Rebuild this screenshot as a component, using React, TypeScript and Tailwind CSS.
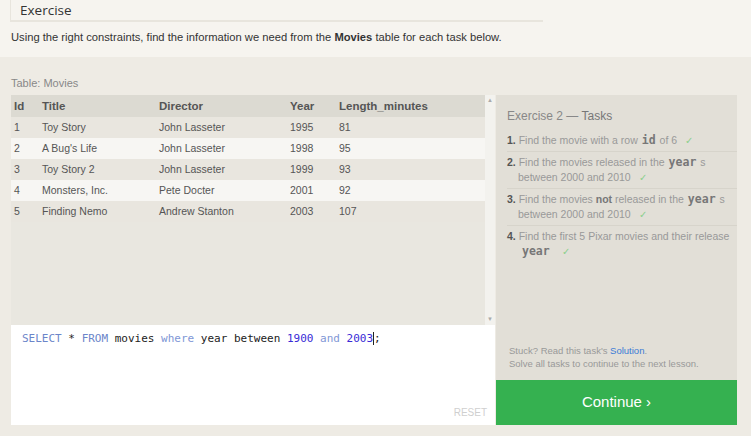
import React from 'react';

const rows = [
  ['1', 'Toy Story', 'John Lasseter', '1995', '81'],
  ['2', "A Bug's Life", 'John Lasseter', '1998', '95'],
  ['3', 'Toy Story 2', 'John Lasseter', '1999', '93'],
  ['4', 'Monsters, Inc.', 'Pete Docter', '2001', '92'],
  ['5', 'Finding Nemo', 'Andrew Stanton', '2003', '107'],
];

const Check = () => <span className="ml-[8px] text-[10px] text-[#8ccf8c]">✓</span>;

const Code = ({ children }: { children: React.ReactNode }) => (
  <span className="mx-[4px] font-['DejaVu_Sans_Mono'] text-[11.5px] leading-none font-bold text-[#777]">{children}</span>
);

const App = () => {
  return (
    <div className="w-[751px] h-[436px] overflow-hidden bg-[#eeebe4] font-['Liberation_Sans',sans-serif] text-[#333]">
      <div className="h-[57px] bg-[#f6f4ef] pl-[10px]">
        <div className="w-[533px] h-[22px] border-l border-b-2 border-[#e8e5dd] pl-[9px] font-['Open_Sans',sans-serif] text-[13.5px] text-[#333]">
          Exercise
        </div>
        <p className="mt-[7px] text-[11.2px] text-[#333] ml-[1px]">
          Using the right constraints, find the information we need from the <b>Movies</b> table for each task below.
        </p>
      </div>

      <div className="pl-[11px]">
        <div className="pt-[18px] h-[38px] text-[11px] text-[#888]">Table: Movies</div>
        <div className="flex gap-[1px]">
          <div className="w-[484px] flex flex-col">
            <div className="h-[230px] flex bg-[#e9e7e0]">
              <div className="flex-1">
                <div className="h-[22px] pt-[2px] flex items-center bg-[#dcdad2] text-[11.5px] font-bold text-[#555]">
                  <span className="w-[31px] pl-[3px]">Id</span>
                  <span className="w-[117px]">Title</span>
                  <span className="w-[131px]">Director</span>
                  <span className="w-[49px]">Year</span>
                  <span>Length_minutes</span>
                </div>
                {rows.map((r, i) => (
                  <div
                    key={r[0]}
                    className={`h-[21px] flex items-center text-[10.5px] text-[#555] ${i % 2 === 1 ? 'bg-[#f7f6f3]' : 'bg-[#e9e6df]'}`}
                  >
                    <span className="w-[31px] pl-[3px]">{r[0]}</span>
                    <span className="w-[117px]">{r[1]}</span>
                    <span className="w-[131px]">{r[2]}</span>
                    <span className="w-[49px]">{r[3]}</span>
                    <span>{r[4]}</span>
                  </div>
                ))}
              </div>
              <div className="w-[10px] bg-[#f3f2ee] flex flex-col justify-between items-center text-[6px] text-[#aaa] py-[1px]">
                <span>▲</span>
                <span>▼</span>
              </div>
            </div>
            <div className="h-[100px] bg-white relative pl-[11px] pt-[6px] font-['DejaVu_Sans_Mono',monospace] text-[11px] text-[#222]">
              <span className="text-[#6b85c9]">SELECT</span> * <span className="text-[#6b85c9]">FROM</span> movies{' '}
              <span className="text-[#7f97d6]">where</span> year between <span className="text-[#3a2bd6]">1900</span>{' '}
              <span className="text-[#7f97d6]">and</span> <span className="text-[#3a2bd6]">2003</span>
              <span className="border-l border-[#222]">;</span>
              <span className="absolute right-[8px] bottom-[5px] font-['Liberation_Sans',sans-serif] text-[10px] text-[#cfcfcf]">RESET</span>
            </div>
          </div>

          <div className="w-[241px] flex flex-col">
            <div className="h-[285px] bg-[#e2dfd7] flex flex-col justify-between pl-[11px] pb-[10px]">
              <div>
                <div className="pt-[12px] text-[12px] text-[#888]">
                  Exercise 2 — <span className="text-[#777]">Tasks</span>
                </div>
                <ol className="mt-[8px] text-[10.5px] text-[#999] leading-[15px]">
                  <li className="pb-[3px] border-b border-[#d7d4cb] pl-[11px] -indent-[11px]">
                    <span className="font-bold text-[#555]">1.</span> Find the movie with a row<Code>id</Code>of 6
                    <Check />
                  </li>
                  <li className="py-[3px] border-b border-[#d7d4cb] pl-[11px] -indent-[11px]">
                    <span className="font-bold text-[#555]">2.</span> Find the movies released in the<Code>year</Code>s
                    between 2000 and 2010
                    <Check />
                  </li>
                  <li className="py-[3px] border-b border-[#d7d4cb] pl-[11px] -indent-[11px]">
                    <span className="font-bold text-[#555]">3.</span> Find the movies <b className="text-[#777]">not</b> released in the
                    <Code>year</Code>s between 2000 and 2010
                    <Check />
                  </li>
                  <li className="py-[3px] pl-[11px] -indent-[11px]">
                    <span className="whitespace-nowrap">
                      <span className="font-bold text-[#555]">4.</span> Find the first 5 Pixar movies and their release
                    </span>{' '}
                    <Code>year</Code>
                    <Check />
                  </li>
                </ol>
              </div>
              <div className="text-[9.5px] leading-[13px] text-[#999] pl-[2px]">
                <div>
                  Stuck? Read this task's <span className="text-[#3b7bd6]">Solution</span>.
                </div>
                <div>Solve all tasks to continue to the next lesson.</div>
              </div>
            </div>
            <div className="h-[45px] bg-[#35b150] flex items-center justify-center text-white text-[15px]">
              Continue ›
            </div>
          </div>
        </div>
      </div>
    </div>
  );
};

export default App;
